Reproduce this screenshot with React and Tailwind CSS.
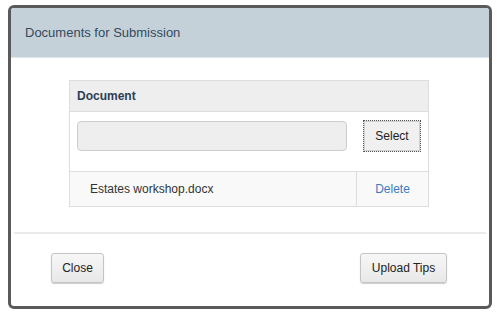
export default function App() {
  const font = { fontFamily: '"Liberation Sans", Arial, sans-serif' };
  return (
    <div className="w-[502px] h-[316px] bg-white pl-[8px] pt-[5px]" style={font}>
      <div className="w-[484px] h-[304px] border-[3px] border-[#5a5a5a] rounded-[6px] bg-white overflow-hidden flex flex-col">
        <div className="h-[50px] shrink-0 bg-[#c5d1d9] border-b border-[#dfe6eb] flex items-center pl-[14px]">
          <span className="text-[13px] text-[#34495e]">Documents for Submission</span>
        </div>
        <div className="pl-[58px] pt-[22px]">
          <div className="w-[360px] border border-[#dddddd]">
            <div className="h-[31px] bg-[#eeeeee] border-b border-[#dddddd] flex items-center pl-[7px]">
              <span className="text-[12px] font-bold text-[#2c3e55]">Document</span>
            </div>
            <div className="h-[60px] border-b border-[#dddddd] flex items-start pt-[8px] pl-[7px]">
              <div className="w-[270px] h-[30px] mt-[1px] bg-[#eeeeee] border border-[#cccccc] rounded-[4px]" />
              <button className="ml-[16px] w-[58px] h-[32px] bg-[#f0f0f0] border border-dotted border-[#555] text-[12px] text-[#222] shadow-[inset_0_0_0_1px_#cfcfcf]">
                Select
              </button>
            </div>
            <div className="h-[34px] bg-[#f9f9f9] flex">
              <div className="w-[286px] flex items-center pl-[20px] text-[12px] text-[#333]">Estates workshop.docx</div>
              <div className="flex-1 border-l border-[#dddddd] flex items-center justify-center text-[12px] text-[#3a7bbf]">Delete</div>
            </div>
          </div>
        </div>
        <div className="mt-[25px] mx-[3px] h-[2px] bg-[#eaeaea]" />
        <div className="flex justify-between pl-[40px] pr-[42px] pt-[19px]">
          <button className="w-[53px] h-[30px] bg-gradient-to-b from-[#f7f7f7] to-[#e8e8e8] border border-[#c4c4c4] rounded-[3px] shadow-[0_1px_1px_rgba(0,0,0,0.2)] text-[12px] text-[#222]">
            Close
          </button>
          <button className="w-[87px] h-[30px] bg-gradient-to-b from-[#f7f7f7] to-[#e8e8e8] border border-[#c4c4c4] rounded-[3px] shadow-[0_1px_1px_rgba(0,0,0,0.2)] text-[12px] text-[#222]">
            Upload Tips
          </button>
        </div>
      </div>
    </div>
  );
}
